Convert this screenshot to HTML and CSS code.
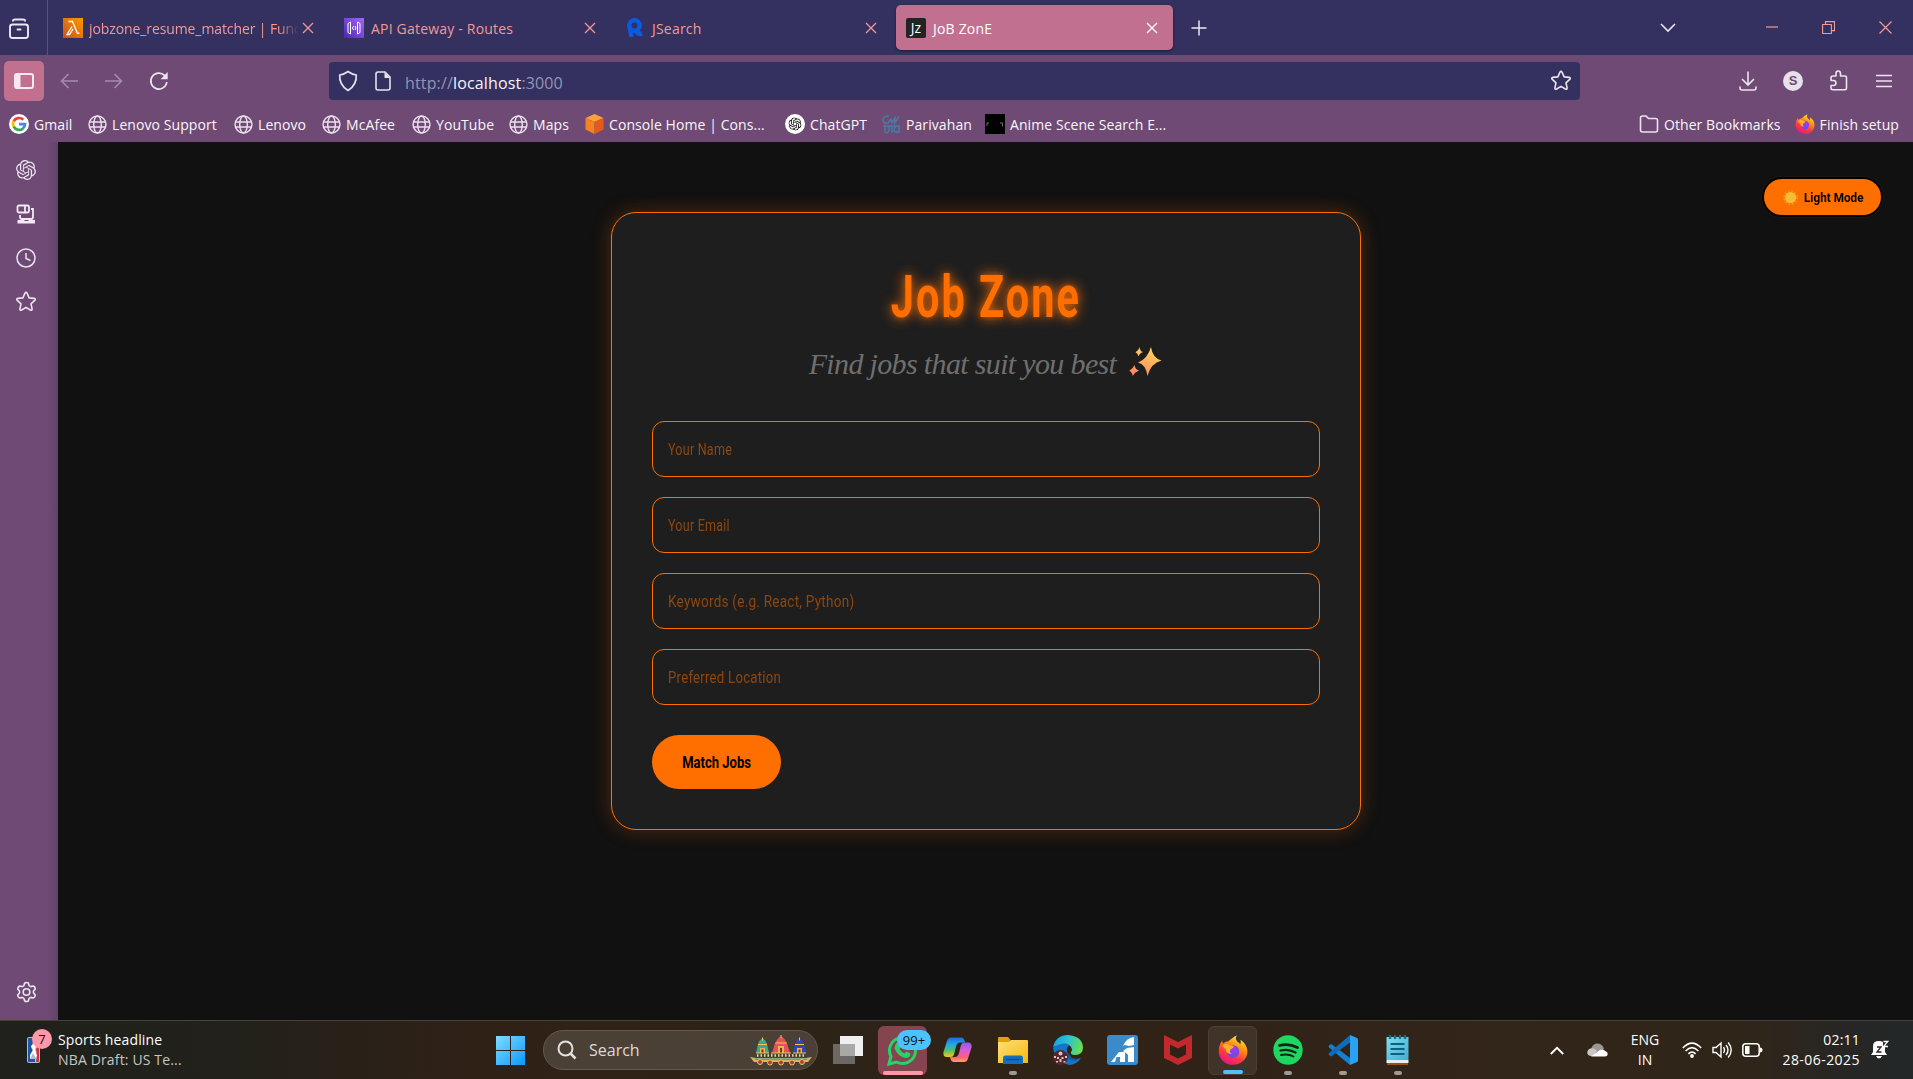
FILE: index.html
```html
<!DOCTYPE html>
<html lang="en">
<head>
<meta charset="utf-8">
<title>JoB ZonE</title>
<link rel="stylesheet" href="styles.css">
</head>
<body>
<svg class="defs" width="0" height="0">
  <defs>
    <linearGradient id="gFox" x1=".8" y1="0" x2=".3" y2="1"><stop offset="0" stop-color="#fff44f"/><stop offset=".35" stop-color="#ff980e"/><stop offset=".7" stop-color="#ff3647"/><stop offset="1" stop-color="#e31587"/></linearGradient>
    <radialGradient id="gOrb" cx=".55" cy=".3" r=".8"><stop offset="0" stop-color="#a63be8"/><stop offset="1" stop-color="#5a4fe0"/></radialGradient>
    <linearGradient id="gWin" x1="0" y1="0" x2="1" y2="1"><stop offset="0" stop-color="#7fdcff"/><stop offset="1" stop-color="#0a9bff"/></linearGradient>
    <linearGradient id="gSpark" x1=".7" y1="0" x2=".3" y2="1"><stop offset="0" stop-color="#ffd95a"/><stop offset="1" stop-color="#ff8560"/></linearGradient>
    <linearGradient id="gCopA" x1="0" y1="0" x2="0" y2="1"><stop offset="0" stop-color="#1b6be0"/><stop offset=".35" stop-color="#22a7ea"/><stop offset=".65" stop-color="#4fbf6c"/><stop offset="1" stop-color="#f6cb1c"/></linearGradient>
    <linearGradient id="gCopB" x1="0" y1="0" x2="0" y2="1"><stop offset="0" stop-color="#8a5cf0"/><stop offset=".4" stop-color="#d95bd6"/><stop offset=".75" stop-color="#f9607a"/><stop offset="1" stop-color="#ffa45c"/></linearGradient>
    <linearGradient id="gFold" x1="0" y1="0" x2="1" y2="1"><stop offset="0" stop-color="#ffe07a"/><stop offset="1" stop-color="#f7b70f"/></linearGradient>
    <linearGradient id="gEdge" x1="0" y1=".3" x2="1" y2=".5"><stop offset="0" stop-color="#1b9de2"/><stop offset=".5" stop-color="#2cc4cf"/><stop offset="1" stop-color="#6be04a"/></linearGradient>
    <linearGradient id="gNote" x1="0" y1="0" x2="1" y2="1"><stop offset="0" stop-color="#80def0"/><stop offset="1" stop-color="#42add0"/></linearGradient>
    <linearGradient id="gLam" x1="0" y1="1" x2="1" y2="0"><stop offset="0" stop-color="#c8511b"/><stop offset="1" stop-color="#ff9900"/></linearGradient>
    <linearGradient id="gApi" x1="0" y1="1" x2="1" y2="0"><stop offset="0" stop-color="#4d27aa"/><stop offset="1" stop-color="#a166ff"/></linearGradient>
    <symbol id="globe" viewBox="0 0 20 20"><g fill="none" stroke="#ebe1ec" stroke-width="1.500"><circle cx="10" cy="10" r="8.900"/><ellipse cx="10" cy="10" rx="4" ry="8.900"/><path d="M1.400 7.400h17.200M1.400 12.600h17.200"/></g></symbol>
    <symbol id="firefox" viewBox="0 0 30 30"><path fill="url(#gFox)" d="M19 .5c-2 2.500-1.200 4.500.8 6.500 1.300.7 2 1.600 2.300 2.600 1-1.800.7-3.600.3-4.800 4 2.500 7 7 7 12A14.300 13.200 0 0 1 .8 16.500C.6 12 2 8.500 4.300 5.600c0 1.300.3 2.200 1 3C7 6.700 8.500 6.500 10 6.600 12 4.500 16 1.500 19 .5z"/><circle cx="15" cy="16.500" r="6.300" fill="url(#gOrb)"/><path fill="#ffb02a" d="M4.500 10.500c2.800-2 5.500-1.700 7.500-.1 2.200 0 3.800.5 3.700 1.400-.2 1.400-3 1.900-3.700 3.400-.5 1.600.6 3 1.500 3.700-3.600.3-6-2-5.600-5.100-1 .2-2-.8-3.400-3.300z"/></symbol>
    <symbol id="star" viewBox="0 0 22 22"><path fill="none" stroke="#ece4ef" stroke-width="1.600" stroke-linejoin="round" d="M9.900 2.300q1.100-1.900 2.200 0l2 4.600 5 .5q2 .5.600 2l-3.700 3.500 1.100 5q.2 2-1.700 1.100L11 16.400 6.600 19q-1.900.9-1.700-1.100l1.100-5-3.700-3.500q-1.400-1.500.6-2l5-.5z"/></symbol>
    <symbol id="knot" viewBox="0 0 24 24"><path fill="currentColor" d="M22.2819 9.8211a5.9847 5.9847 0 0 0-.5157-4.9108 6.0462 6.0462 0 0 0-6.5098-2.9A6.0651 6.0651 0 0 0 4.9807 4.1818a5.9847 5.9847 0 0 0-3.9977 2.9 6.0462 6.0462 0 0 0 .7427 7.0966 5.98 5.98 0 0 0 .511 4.9107 6.051 6.051 0 0 0 6.5146 2.9001A5.9847 5.9847 0 0 0 13.2599 24a6.0557 6.0557 0 0 0 5.7718-4.2058 5.9894 5.9894 0 0 0 3.9977-2.9001 6.0557 6.0557 0 0 0-.7475-7.0729zm-9.022 12.6081a4.4755 4.4755 0 0 1-2.8764-1.0408l.1419-.0804 4.7783-2.7582a.7948.7948 0 0 0 .3927-.6813v-6.7369l2.02 1.1686a.071.071 0 0 1 .038.052v5.5826a4.504 4.504 0 0 1-4.4945 4.4944zm-9.6607-4.1254a4.4708 4.4708 0 0 1-.5346-3.0137l.142.0852 4.783 2.7582a.7712.7712 0 0 0 .7806 0l5.8428-3.3685v2.3324a.0804.0804 0 0 1-.0332.0615L9.74 19.9502a4.4992 4.4992 0 0 1-6.1408-1.6464zM2.3408 7.8956a4.485 4.485 0 0 1 2.3655-1.9728V11.6a.7664.7664 0 0 0 .3879.6765l5.8144 3.3543-2.0201 1.1685a.0757.0757 0 0 1-.071 0l-4.8303-2.7865A4.504 4.504 0 0 1 2.3408 7.872zm16.5963 3.8558L13.1038 8.364 15.1192 7.2a.0757.0757 0 0 1 .071 0l4.8303 2.7913a4.4944 4.4944 0 0 1-.6765 8.1042v-5.6772a.79.79 0 0 0-.407-.667zm2.0107-3.0231l-.142-.0852-4.7735-2.7818a.7759.7759 0 0 0-.7854 0L9.409 9.2297V6.8974a.0662.0662 0 0 1 .0284-.0615l4.8303-2.7866a4.4992 4.4992 0 0 1 6.6802 4.66zM8.3065 12.863l-2.02-1.1638a.0804.0804 0 0 1-.038-.0567V6.0742a4.4992 4.4992 0 0 1 7.3757-3.4537l-.142.0805L8.704 5.459a.7948.7948 0 0 0-.3927.6813zm1.0976-2.3654l2.602-1.4998 2.6069 1.4998v2.9994l-2.5974 1.4997-2.6067-1.4997Z"/></symbol>
    <symbol id="close" viewBox="0 0 12 12"><path fill="none" stroke="currentColor" stroke-width="1.300" d="M1 1l10 10M11 1L1 11"/></symbol>
  </defs>
</svg>

<header class="titlebar">
  <div class="recent"><svg width="22" height="22" viewBox="0 0 22 22" fill="none" stroke="#eae6f3" stroke-width="1.900" stroke-linecap="round"><rect x="2" y="6.500" width="18" height="13.500" rx="2.500"/><path d="M5 2.800Q5 1.500 7 1.500h8q2 0 2 1.300M9.500 11.500h3"/></svg></div>
  <div class="tab tab-first">
    <svg width="20" height="20" viewBox="0 0 20 20"><path fill="url(#gLam)" d="M0 0h20v20H0z"/><path fill="none" stroke="#fff" stroke-width="1.300" d="M5.500 3.500h4l5 12 2-.6M9 8.500L4 16.500h2.500L10 11"/></svg>
    <span class="tab-title tab-fade">jobzone_resume_matcher | Func</span>
    <svg class="x" width="12" height="12"><use href="#close"/></svg>
  </div>
  <div class="tab">
    <svg width="20" height="20" viewBox="0 0 20 20"><path fill="url(#gApi)" d="M0 0h20v20H0z"/><path fill="none" stroke="#fff" stroke-width="1" d="M6.500 4L4 5.500v9L6.500 16zM13.500 4L16 5.500v9L13.500 16zM9.500 8l-1 2 1 2M11 8l1 2-1 2"/></svg>
    <span class="tab-title">API Gateway - Routes</span>
    <svg class="x" width="12" height="12"><use href="#close"/></svg>
  </div>
  <div class="tab">
    <svg width="20" height="20" viewBox="0 0 20 20" fill="none" stroke="#0a5be0" stroke-width="4.500"><circle cx="9.500" cy="7.500" r="5.200"/><path d="M5 10l1.500 9M10 12q3 4.500 7 3.500"/></svg>
    <span class="tab-title">JSearch</span>
    <svg class="x" width="12" height="12"><use href="#close"/></svg>
  </div>
  <div class="tab tab-active">
    <span class="jz">Jz</span>
    <span class="tab-title">JoB ZonE</span>
    <svg class="x" width="12" height="12"><use href="#close"/></svg>
  </div>
  <svg class="newtab" width="16" height="16" viewBox="0 0 16 16"><path stroke="#eae6f3" stroke-width="1.500" d="M8 .5v15M.5 8h15"/></svg>
  <div class="window-controls">
    <svg width="16" height="10" viewBox="0 0 16 10"><path fill="none" stroke="#eae6f3" stroke-width="1.600" d="M1 1l7 7 7-7"/></svg>
    <svg width="12" height="12" viewBox="0 0 12 12"><path stroke="#f59a90" stroke-width="1.200" d="M0 5h12"/></svg>
    <svg width="13" height="13" viewBox="0 0 13 13"><path fill="none" stroke="#f59a90" stroke-width="1.100" d="M.6 3.500h8.800v9H.6zM3.500 3.500V.6h9v9H9.400"/></svg>
    <svg width="13" height="13" viewBox="0 0 13 13"><path stroke="#f59a90" stroke-width="1.200" d="M.5.500l12 12M12.500.500l-12 12"/></svg>
  </div>
</header>

<div class="toolbar">
  <div class="sidebar-toggle"><svg width="20" height="16" viewBox="0 0 20 16"><rect x="1" y="1" width="18" height="14" rx="2" fill="none" stroke="#f8e9f1" stroke-width="2"/><path fill="#f8e9f1" d="M1 1h5.500v14H1z"/></svg></div>
  <div class="nav">
    <svg width="18" height="16" viewBox="0 0 18 16" fill="none" stroke="#a58aaa" stroke-width="1.600"><path d="M18 8H1.500M8.500 1l-7 7 7 7"/></svg>
    <svg width="18" height="16" viewBox="0 0 18 16" fill="none" stroke="#a58aaa" stroke-width="1.600"><path d="M0 8h16.500M9.500 1l7 7-7 7"/></svg>
    <svg width="20" height="20" viewBox="0 0 20 20"><path fill="none" stroke="#ece4ef" stroke-width="1.700" d="M17.800 11a8 8 0 1 1-2.300-6.600l1.500 1.500"/><path fill="#ece4ef" d="M18.700 1v7.200h-7.200z"/></svg>
  </div>
  <div class="urlbar">
    <svg width="20" height="22" viewBox="0 0 20 22" fill="none" stroke="#e6e3ef" stroke-width="1.700" stroke-linejoin="round"><path d="M10 1.500Q14 4.500 18.300 5q.6 10-8.300 15.500Q1.100 15 1.700 5 6 4.500 10 1.500z"/></svg>
    <svg width="16" height="20" viewBox="0 0 16 20" fill="none" stroke="#e6e3ef" stroke-width="1.600"><path d="M3 1h7l5 5v11q0 2-2 2H3q-2 0-2-2V3q0-2 2-2z"/><path fill="#e6e3ef" stroke="none" d="M9.500 1V7h5.500z"/></svg>
    <span class="url">http://<b>localhost</b>:3000</span>
    <svg class="fav" width="22" height="22"><use href="#star"/></svg>
  </div>
  <div class="tools">
    <svg width="18" height="20" viewBox="0 0 18 20" fill="none" stroke="#ece4ef" stroke-width="1.600"><path d="M9 .5V14M3 8l6 6 6-6M1 15.500V17q0 2 2 2h12q2 0 2-2v-1.500"/></svg>
    <span class="avatar">S</span>
    <svg width="20" height="21" viewBox="0 0 20 21"><path fill="none" stroke="#ece4ef" stroke-width="1.600" stroke-linejoin="round" d="M7 6V3.500q0-2.500 2.200-2.500t2.300 2.500V6h4.500q1.500 0 1.500 1.500V18q0 1.700-1.500 1.700H4Q2 19.700 2 18v-2.500h2.500Q7 15.300 7 13t-2.500-2.500H2V8q0-2 2-2z"/></svg>
    <svg width="16" height="14" viewBox="0 0 16 14"><path stroke="#ece4ef" stroke-width="1.500" d="M0 1.500h16M0 7h16M0 12.500h16"/></svg>
  </div>
</div>

<nav class="bookmarks">
  <div class="marks">
    <span><svg width="20" height="20" viewBox="0 0 20 20"><circle cx="10" cy="10" r="10" fill="#fff"/><g fill="none" stroke-width="2.700"><path stroke="#ea4335" d="M14.300 5.800A6 6 0 0 0 4.700 7.300"/><path stroke="#fbbc05" d="M4.700 7.200a6 6 0 0 0 0 5.600"/><path stroke="#34a853" d="M4.700 12.700A6 6 0 0 0 14 14.400"/><path stroke="#4285f4" d="M13.900 14.500A6 6 0 0 0 16 10.200h-6"/></g></svg>Gmail</span>
    <span><svg width="19" height="19"><use href="#globe"/></svg>Lenovo Support</span>
    <span><svg width="19" height="19"><use href="#globe"/></svg>Lenovo</span>
    <span><svg width="19" height="19"><use href="#globe"/></svg>McAfee</span>
    <span><svg width="19" height="19"><use href="#globe"/></svg>YouTube</span>
    <span><svg width="19" height="19"><use href="#globe"/></svg>Maps</span>
    <span><svg width="19" height="20" viewBox="0 0 19 20"><path fill="#f9a13a" d="M9.500 0L18.500 4 9.500 8 .5 4z"/><path fill="#f58220" d="M.5 4l9 4v12l-9-4.500z"/><path fill="#e25a1c" d="M18.500 4l-9 4v12l9-4.500z"/></svg>Console Home | Cons...</span>
    <span><svg class="gpt" width="20" height="20" viewBox="0 0 20 20"><circle cx="10" cy="10" r="10" fill="#fff"/><use href="#knot" x="3.500" y="3.500" width="13" height="13"/></svg>ChatGPT</span>
    <span><svg width="19" height="19" viewBox="0 0 19 19" fill="none" stroke="#477ba6" stroke-width="1.500"><path d="M7 1Q1 1 1 5t5 3l3-4 1 4 3-5v5l4-7M1 11h17M3 11v6q3 2 4-2v-4M10 11v7M14 11q-4 5 0 6t3-6v7"/></svg>Parivahan</span>
    <span><svg width="20" height="20" viewBox="0 0 20 20"><path d="M0 0h20v20H0z"/><path stroke="#8a8a8a" stroke-width=".8" fill="none" d="M2 12V9h2M15 9h2.500v3.500"/></svg>Anime Scene Search E...</span>
  </div>
  <div class="marks-right">
    <span><svg width="20" height="18" viewBox="0 0 20 18"><path fill="none" stroke="#ece4ef" stroke-width="1.600" d="M3.500 1H7l2.500 2.500h7q2 0 2 2V15q0 2-2 2h-13q-2 0-2-2V3q0-2 2-2z"/></svg>Other Bookmarks</span>
    <span><svg width="20" height="20"><use href="#firefox"/></svg>Finish setup</span>
  </div>
</nav>

<div class="main">
  <aside class="sidebar">
    <svg width="20" height="20"><use href="#knot"/></svg>
    <svg width="20" height="20" viewBox="0 0 20 20"><g fill="none" stroke="#f1e9f3" stroke-width="1.800"><rect x="1.500" y="1.500" width="11.500" height="7" rx="1.500"/><path d="M9 1.500v7M15 5h2v8q0 2-2 2H6q-2 0-2-2v-2"/></g><path fill="#f1e9f3" d="M1.500 16H8l1 1h3l1-1h6v3.500H1.500z"/></svg>
    <svg width="20" height="20" viewBox="0 0 20 20" fill="none" stroke="#ece4ef" stroke-width="1.500"><circle cx="10" cy="10" r="9"/><path d="M10 5v5.500l4.500 2"/></svg>
    <svg width="22" height="22"><use href="#star"/></svg>
    <svg class="gear" width="21" height="22" viewBox="0 0 21 22" fill="none" stroke="#ece4ef" stroke-width="1.600" stroke-linejoin="round"><circle cx="10.500" cy="11" r="3.300"/><path d="M8.700 2q1.800-1 3.600 0l.8 2.600 1.600 1 2.700-.6q1.600.8 1.900 2.900L17.500 10v2l1.800 2.100q-.3 2.100-1.900 2.900l-2.700-.6-1.600 1-.8 2.600q-1.800 1-3.600 0l-.8-2.600-1.600-1-2.700.6q-1.600-.8-1.900-2.900L3.500 12v-2L1.700 7.900Q2 5.800 3.600 5l2.700.6 1.600-1z"/></svg>
  </aside>
  <main class="page">
    <button class="mode"><svg width="17" height="17" viewBox="0 0 17 17"><circle cx="8.500" cy="8.500" r="6.500" fill="none" stroke="#f29a1c" stroke-width="1.600" stroke-dasharray="1.700 1.700"/><circle cx="8.500" cy="8.500" r="5.600" fill="#f5bd35"/></svg><span>Light Mode</span></button>
    <section class="card">
      <h1><span>Job Zone</span></h1>
      <p class="tagline"><span>Find jobs that suit you best</span><svg width="33" height="30" viewBox="0 0 33 30"><path fill="url(#gSpark)" d="M22 0q1.500 11 10.500 13.500Q22 16 18.500 29 16.500 17 9 15.500 18.500 12 22 0zM10.500 0q.3 4.200 3.500 5-3.500 1-4.500 4.500Q8.800 6 6.500 5.300 9.500 4 10.500 0zM5.500 18q.7 4.500 4.500 5.500-4 1.500-6.200 5.500Q3 25 .2 23.800 4 22 5.500 18z"/></svg></p>
      <form class="fields">
        <div class="field"><span class="short">Your Name</span></div>
        <div class="field"><span class="short">Your Email</span></div>
        <div class="field"><span>Keywords (e.g. React, Python)</span></div>
        <div class="field"><span class="mid">Preferred Location</span></div>
        <button type="button" class="match"><span>Match Jobs</span></button>
      </form>
    </section>
  </main>
</div>

<footer class="taskbar">
  <div class="news">
    <div class="nba"><svg width="13" height="26" viewBox="0 0 13 26"><rect width="13" height="26" rx="2" fill="#b9bcc8"/><path fill="#1d58a8" d="M1 1h7L4 10l2 4-3 5v6H1z"/><path fill="#fff" d="M7 7l2 1-1 5 2 5-1 3-3-5-3 6v-4l3-5-2-4z"/><path fill="#1d58a8" d="M3 22h5v3H3z"/><path fill="#d2303f" d="M12 4v21H9l1-6-1-7 2-3-1-5z"/></svg><span class="count">7</span></div>
    <div class="news-text"><span>Sports headline</span><span class="dim">NBA Draft: US Te...</span></div>
  </div>
  <div class="apps">
    <svg class="win" width="29" height="29" viewBox="0 0 29 29"><path fill="url(#gWin)" d="M0 0h14v14H0zM15 0h14v14H15zM0 15h14v14H0zM15 15h14v14H15z"/></svg>
    <div class="search">
      <svg width="20" height="20" viewBox="0 0 20 20" fill="none" stroke="#e4e1de" stroke-width="2"><circle cx="8.500" cy="8.500" r="7"/><path stroke-width="2.500" d="M13.500 13.500l5 5"/></svg>
      <span>Search</span>
      <svg class="chariots" width="62" height="31" viewBox="0 0 62 31"><path fill="#3fa595" d="M12.500 3q3 2 4.500 6l2 9H6l2-9q1.500-4 4.500-6z"/><path fill="#e4525a" d="M31 1q4 2.500 6 7l3 10H22l3-10q2-4.500 6-7z"/><path fill="#3048b0" d="M49.500 3q3 2 4.500 6l2 9H43l2-9q1.500-4 4.500-6z"/><path fill="#e8b54a" d="M10 13h5v5h-5zM28 11h6v7h-6zM47 13h5v5h-5z"/><path fill="#7b3030" d="M11.500 14.500h2V18h-2zM30 13h2v5h-2zM48.500 14.500h2V18h-2z"/><path stroke="#f0c64c" stroke-width="1" fill="none" d="M8 9.500h9M25.500 8h11M45 9.500h9M6 18h13M21 18h20M43 18h13M31 0v3M12.500 2.500v3M49.500 2.500v3"/><path stroke="#e7d9a0" stroke-width="2.500" stroke-dasharray="1.500 2" d="M7 20.500h48"/><path fill="#d9b45a" d="M0 22l6 1h50l6-1-4 5H4z"/><path fill="#3aa5b5" d="M5 23.500h52V25H5z"/><g fill="#b83b38" stroke="#e9c15a" stroke-width="1"><circle cx="10" cy="27" r="2.500"/><circle cx="20" cy="27.500" r="2.500"/><circle cx="31" cy="27.500" r="2.500"/><circle cx="42" cy="27.500" r="2.500"/><circle cx="52" cy="27" r="2.500"/></g></svg>
    </div>
    <div class="app"><svg width="30" height="29" viewBox="0 0 30 29"><path fill="#6b6866" d="M0 8h22v20H0z"/><path fill="#efefef" d="M7 0h23v20H7z"/><path fill="#a9a8a7" d="M7 8h15v12H7z"/></svg></div>
    <div class="app whatsapp"><svg width="31" height="31" viewBox="0 0 31 31"><path fill="none" stroke="#25d366" stroke-width="3" d="M2 29l2-7.500A13 13 0 1 1 9.500 27z"/><path fill="#25d366" d="M10 7.500l2.500.5 1.500 4-1.500 2q2 3.500 5 4.500l2-2 4 2q0 4-4.500 4.500-8-1-11.500-9.500Q7.500 10 10 7.500z"/></svg><span class="pill">99+</span></div>
    <div class="app"><svg width="29" height="26" viewBox="0 0 29 26"><path fill="url(#gCopA)" d="M8 .5H18q2.500 0 3.500 3l.5 2H17q-3 0-4 4l-2 8q-.7 2.500-3.500 2.500H4Q-.3 20 .5 15L4 4Q5 .5 8 .5z"/><path fill="url(#gCopB)" d="M21 25H11q-2.500 0-3.500-3l-.5-2H12q3 0 4-4l2-8q.7-2.500 3.500-2.500H25Q29.300 5.500 28.500 10.500L25 21.500Q24 25 21 25z"/></svg></div>
    <div class="app run"><svg width="30" height="28" viewBox="0 0 30 28"><path fill="#e0a008" d="M0 2q0-1 1-1h9l2.500 3v3H0z"/><path fill="url(#gFold)" d="M0 6h11l2-2h16q1 0 1 1v22H0z"/><path fill="#0f6fc0" d="M5 28v-6q0-2.500 2.500-2.500h15Q25 19.500 25 22v6z"/><path stroke="#0a4c8c" stroke-width="1.500" d="M8.500 23.500h13"/></svg></div>
    <div class="app"><svg width="30" height="30" viewBox="0 0 30 30"><path fill="#1576c8" d="M0 13Q3 28 17 30q7-1 11-7-9 3-13-3-3-8 2-10Q6 5 0 13z"/><path fill="#155a9d" d="M13 17q0 8 8 9l7-3q-9 3-12-4z"/><path fill="url(#gEdge)" d="M0 12Q3 0 15 0q14 1 15 12 0 8-8 8-5 0-4-3 2-2 0-5Q14 5 0 12z"/><circle cx="7.500" cy="22.500" r="7.500" fill="#4b2a31"/><g fill="#f0b7b7"><circle cx="7.500" cy="18.500" r="2"/><path d="M4 22h2v2H4zM8.500 22h2v2h-2zM6.500 24h2v3h-2zM1 21h2v2H1zM12 21h2v2h-2zM3 26h2v1.500H3zM10.500 26h2v1.500h-2z"/></g></svg></div>
    <div class="app"><svg width="31" height="30" viewBox="0 0 31 30"><rect width="31" height="30" rx="3" fill="#3b8bcb"/><path fill="#fff" d="M4 27l8-10h6v10h-5v-5H9.500L8 27zM27 2v8l-5 1-4-1-2 1q3-8 11-9zM20 13l7-1v15h-6v-7l-2-2-3-2z"/></svg></div>
    <div class="app"><svg width="28" height="30" viewBox="0 0 28 30"><path fill="#c2292e" fill-rule="evenodd" d="M0 0l14 7 14-7v23l-14 7-14-7zM6 9.500v10l8 4 8-4v-10l-8 4z"/></svg></div>
    <div class="app current"><svg width="30" height="30"><use href="#firefox"/></svg></div>
    <div class="app run"><svg width="30" height="30" viewBox="0 0 30 30"><circle cx="15" cy="15" r="14.700" fill="#1ed760"/><g fill="none" stroke="#152018" stroke-linecap="round"><path stroke-width="2.800" d="M6.500 10.500q9-2.500 18 2"/><path stroke-width="2.300" d="M7.500 15.500q8-2 15 2"/><path stroke-width="1.900" d="M8 20q7-1.500 12.500 1.500"/></g></svg></div>
    <div class="app run"><svg width="30" height="30" viewBox="0 0 30 30"><path fill="#1480cf" d="M22 30L1 12.500q-1-1 0-2l1-1q1-.7 2 0L22 23z"/><path fill="#0f6cb8" d="M22 0v7.500L4 21q-1 .7-2 0l-1-1q-1-1 0-2z"/><path fill="#2ba1f3" d="M22 0l7 3q1 .5 1 1.500v21q0 1-1 1.500l-7 3z"/></svg></div>
    <div class="app run"><svg width="23" height="30" viewBox="0 0 23 30"><path fill="#9d4f17" d="M1 27h21v3H1z"/><path fill="#e9edef" d="M.5 25h22v3H.5z"/><path fill="url(#gNote)" d="M.5 2h22v23H.5z"/><path stroke="#0f5f7e" stroke-width="1.800" d="M4.500 9h14M4.500 14h14M4.500 19h14"/><path stroke="#176c8f" stroke-width="2.400" d="M4 0v4M9 0v4M14 0v4M19 0v4"/></svg></div>
  </div>
  <div class="tray">
    <svg width="14" height="9" viewBox="0 0 14 9"><path fill="none" stroke="#fff" stroke-width="1.900" d="M.8 8L7 1.800 13.200 8"/></svg>
    <svg class="cloud" width="21" height="14" viewBox="0 0 21 14"><path fill="#9b9791" d="M4 7Q5 1 10 .5q5 0 7 5l-6 5z"/><path fill="#c9c6c2" d="M3.500 13Q0 12 .3 9 1 5.500 5 5.300 8 5 10 8l-3 5z"/><path fill="#fff" d="M4 13.500L13 7q4-1.500 5 1 2.700.5 2.700 3-.2 2.500-3 2.500z"/></svg>
    <div class="lang"><span>ENG</span><span>IN</span></div>
    <svg class="wifi" width="20" height="16" viewBox="0 0 20 16"><g fill="none" stroke="#fff" stroke-width="1.600"><path d="M.8 6Q10-3.800 19.200 6M3.600 9q6.400-6.700 12.800 0M6.400 11.900q3.600-3.700 7.200 0"/></g><circle cx="10" cy="14" r="1.900" fill="#fff"/></svg>
    <svg class="sound" width="20" height="18" viewBox="0 0 20 18" fill="none" stroke="#fff" stroke-width="1.400"><path d="M1 6.500h3l5-4.500v14l-5-4.500H1zM11.500 6.200q2 2.800 0 5.600M14 4q4 5 0 10M16.200 1.500q6 7.500 0 15"/></svg>
    <svg class="battery" width="21" height="14" viewBox="0 0 21 14"><rect x=".8" y=".8" width="16.400" height="12.400" rx="3" fill="none" stroke="#fff" stroke-width="1.500"/><path fill="#fff" d="M3 3h4.500v8H3zM18 4.500q2.500 0 2.500 2.500T18 9.500z"/></svg>
    <div class="clock"><span>02:11</span><span class="date">28-06-2025</span></div>
    <svg class="bell" width="18" height="20" viewBox="0 0 18 20"><path fill="#fff" d="M0 15l2-3V6q0-5 6-5 2 0 4 1v4h2v6l2 3zM5 16h6q-3 5-6 0z"/><path fill="none" stroke="#2b241b" stroke-width="1.300" d="M6 7h4l-4 5h4.500"/><path fill="none" stroke="#fff" stroke-width="1.300" d="M12.500 1.500h4.300l-4.300 5h4.500"/></svg>
  </div>
</footer>
</body>
</html>
```
FILE: styles.css
```css
* { box-sizing: border-box; }
body {
  margin: 0;
  width: 1913px;
  height: 1079px;
  overflow: hidden;
  display: flex;
  flex-direction: column;
  background: #111;
  font-family: "Open Sans", "Noto Sans", sans-serif;
  font-size: 14px;
  white-space: nowrap;
}
svg { flex: none; display: block; }
.defs { position: absolute; }

/* tab strip */
.titlebar { flex: none; height: 55px; display: flex; align-items: center; background: #343060; }
.recent { width: 48px; height: 55px; padding: 18px 0 0 8px; border-right: 1px solid #6e4a74; }
.tab { width: 281px; height: 45px; padding: 0 13px 0 15px; display: flex; align-items: center; gap: 7px; color: #f29a95; }
.tab-title { flex: 1; min-width: 0; padding-top: 1px; letter-spacing: .2px; }
.tab-first { gap: 6px; padding-right: 15px; }
.tab-fade { letter-spacing: -.1px; -webkit-mask-image: linear-gradient(90deg, #000 90%, transparent); mask-image: linear-gradient(90deg, #000 90%, transparent); }
.tab .x { margin-left: -3px; }
.tab:nth-child(3), .tab:nth-child(4) { padding-right: 14px; }
.tab-active { width: 277px; margin-left: 5px; padding: 0 15px 0 10px; gap: 7px; border-radius: 5px; background: #c27090; color: #fff; box-shadow: 0 1px 3px rgba(0, 0, 0, .45); }
.jz { width: 20px; height: 20px; border-radius: 2px; background: #232323; color: #fff; font-size: 14px; line-height: 20px; text-align: center; }
.newtab { margin-left: 18px; }
.window-controls { margin-left: auto; padding-right: 21px; display: flex; align-items: center; gap: 44px; }
.window-controls svg:first-child { margin-right: 46px; }

/* navigation toolbar */
.toolbar { flex: none; height: 51px; display: flex; align-items: center; background: #6e4a74; padding: 0 21px 0 4px; }
.sidebar-toggle { width: 40px; height: 40px; display: grid; place-items: center; border-radius: 5px; background: #c27090; }
.nav { display: flex; align-items: center; gap: 27px; width: 285px; padding-left: 16px; }
.nav svg:last-child { margin-left: -1px; }
.urlbar { width: 1251px; height: 38px; display: flex; align-items: center; padding: 0 8px 0 9px; border-radius: 4px; background: #343060; }
.urlbar svg + svg { margin-left: 17px; }
.url { margin-left: 14px; padding-top: 4px; font-size: 16px; letter-spacing: .15px; color: #9694b2; }
.url b { font-weight: 400; color: #f6f4fa; }
.urlbar .fav { margin-left: auto; }
.tools { margin-left: auto; display: flex; align-items: center; gap: 26px; }
.tools svg:nth-of-type(2) { margin-right: 1px; }
.avatar { width: 20px; height: 20px; border-radius: 50%; background: #e9e1ea; color: #6e4a74; font: bold 13px/20px "Liberation Sans", sans-serif; text-align: center; }

/* bookmarks */
.bookmarks { flex: none; height: 36px; display: flex; justify-content: space-between; background: #6e4a74; color: #fbf6fb; padding: 0 14px 0 9px; }
.marks { display: grid; grid-template-columns: 79px 146px 88px 90px 97px 76px 200px 97px 103px 190px; }
.bookmarks span { display: flex; align-items: center; gap: 5px; letter-spacing: .08px; }
.marks-right { display: flex; gap: 14px; }
.gpt { color: #111; }

/* page area */
.main { flex: 1; display: flex; min-height: 0; }
.sidebar { width: 58px; padding: 18px 6px 17px 0; display: flex; flex-direction: column; align-items: center; gap: 24px; background: linear-gradient(90deg, #6e4a74 82%, #64426a); color: #ece4ef; }
.sidebar svg:nth-child(4) { margin-top: -1px; }
.gear { margin-top: auto; }
.page { flex: 1; display: flex; flex-direction: column; align-items: center; background: #111; }
.mode {
  align-self: flex-end;
  width: 117px;
  height: 36px;
  margin: 37px 32px -3px 0;
  padding: 0 0 0 18px;
  display: flex;
  align-items: center;
  gap: 5px;
  border: 0;
  border-radius: 18px;
  background: #ff6f00;
  box-shadow: 0 0 0 2px #000, 0 0 2px 2px rgba(255, 111, 0, .2);
  color: #000;
  font: bold 13.500px Roboto, sans-serif;
}
.mode span { transform: scaleX(.87); transform-origin: left; }
.card { width: 750px; height: 618px; padding: 0 40px; border: 1px solid #ff6f00; border-radius: 25px; background: #1e1e1e; box-shadow: 0 0 20px rgba(255, 111, 0, .27); }
h1 { margin: 50px 0 0; height: 68px; line-height: 68px; text-align: center; font-family: Roboto, sans-serif; font-size: 60px; font-weight: 700; color: #ff6f00; text-shadow: 0 0 15px #ff6f00, 0 0 6px rgba(255, 111, 0, .4); }
h1 span { display: inline-block; letter-spacing: 3px; transform: scaleX(.69); }
.tagline { height: 60px; margin: 1px 0 29px; display: flex; align-items: center; justify-content: center; gap: 13px; font: italic 30px "Liberation Serif", serif; color: #6f6f6f; }
.tagline span { padding-top: 3px; letter-spacing: -.65px; }
.fields { display: flex; flex-direction: column; gap: 20px; }
.field { height: 56px; padding: 0 15px; display: flex; align-items: center; border: 1px solid #ff6f00; border-radius: 12px; font: 16.500px Roboto, sans-serif; color: #8e470f; }
.field span { letter-spacing: .3px; transform: scaleX(.82); transform-origin: left; }
.field .short { transform: scaleX(.76); }
.field .mid { transform: scaleX(.8); }
.match { width: 129px; height: 54px; margin-top: 10px; display: grid; place-items: center; border: 0; border-radius: 27px; background: #ff6f00; color: #000; font: bold 16.500px Roboto, sans-serif; }
.match span { transform: translateX(1px) scaleX(.79); }

/* taskbar */
.taskbar { flex: none; height: 59px; display: flex; align-items: center; border-top: 1px solid #46423b; background: linear-gradient(90deg, #20211c 0, #22211b 230px, #302116 480px, #2d2317 800px, #312217 1200px, #32251a 1500px, #302519 1750px, #262625 1850px, #232728); color: #fff; }
.news { width: 496px; display: flex; align-items: center; padding-left: 27px; letter-spacing: .15px; }
.nba { position: relative; width: 31px; }
.count { position: absolute; left: 5px; top: -8px; width: 20px; height: 20px; border-radius: 50%; background: #ff98a8; color: #111; font-size: 13px; line-height: 20px; text-align: center; }
.news-text, .lang, .clock { display: flex; flex-direction: column; line-height: 20px; }
.dim { color: #c6c6c3; }
.apps { display: flex; align-items: center; }
.search { width: 275px; height: 40px; margin: 0 5px 0 18px; padding: 0 5px 0 13px; display: flex; align-items: center; gap: 12px; border: 1px solid #635a4e; border-radius: 20px; background: #4a4035; color: #dedad6; font-size: 16px; }
.chariots { margin-left: auto; }
.app { position: relative; width: 49px; height: 49px; margin-right: 6px; display: grid; place-items: center; border-radius: 6px; }
.whatsapp { background: #854550; }
.app.run::after, .app.current::after, .whatsapp::after { content: ""; position: absolute; bottom: 0; left: 21px; width: 8px; height: 4px; border-radius: 2px; background: #9e9a95; }
.app.current { background: #40342a; border: 1px solid #4a3f35; }
.app.current::after { left: 14px; width: 20px; background: #4cc2ff; }
.whatsapp::after { left: 5px; width: 40px; background: #ff98a8; }
.pill { position: absolute; left: 19px; top: 4px; width: 34px; height: 20px; border-radius: 10px; background: #4cc2ff; color: #111; font-size: 13px; line-height: 20px; text-align: center; }
.tray { margin-left: auto; padding-right: 24px; display: flex; align-items: center; }
.cloud { margin-left: 23px; }
.lang { width: 30px; margin-left: 22px; text-align: center; align-items: center; }
.wifi { margin-left: 22px; }
.sound, .battery { margin-left: 10px; }
.clock { width: 97px; text-align: right; letter-spacing: .2px; }
.date { letter-spacing: .45px; }
.bell { margin-left: 11px; }
```
